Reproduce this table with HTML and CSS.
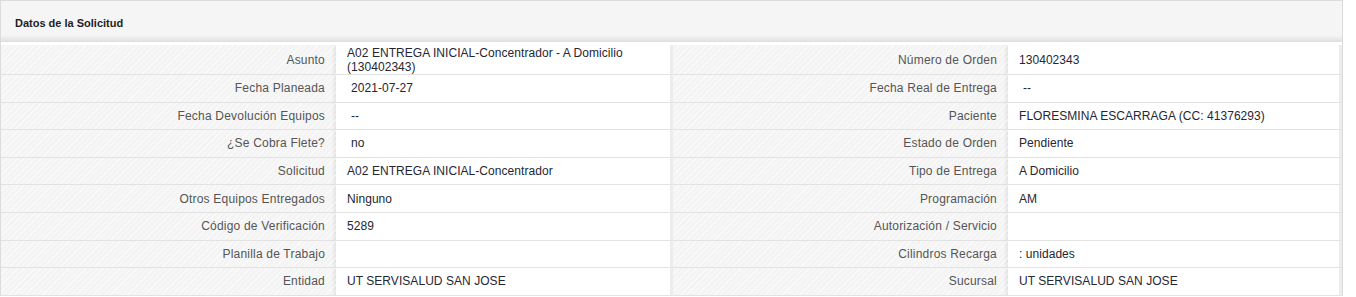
FILE: index.html
```html
<!DOCTYPE html>
<html lang="es">
<head>
<meta charset="utf-8">
<title>Datos de la Solicitud</title>
<link rel="stylesheet" href="styles.css">
</head>
<body>
<div class="panel">
  <div class="panel-head"><h3 class="panel-title">Datos de la Solicitud</h3></div>
  <div class="grid">
    <div class="lbl first">Asunto</div><div class="val first">A02 ENTREGA INICIAL-Concentrador - A Domicilio<br>(130402343)</div>
    <div class="lbl first">Número de Orden</div><div class="val first">130402343</div>

    <div class="lbl">Fecha Planeada</div><div class="val ind">2021-07-27</div>
    <div class="lbl">Fecha Real de Entrega</div><div class="val ind">--</div>

    <div class="lbl">Fecha Devolución Equipos</div><div class="val ind">--</div>
    <div class="lbl">Paciente</div><div class="val">FLORESMINA ESCARRAGA (CC: 41376293)</div>

    <div class="lbl">¿Se Cobra Flete?</div><div class="val ind">no</div>
    <div class="lbl">Estado de Orden</div><div class="val">Pendiente</div>

    <div class="lbl">Solicitud</div><div class="val">A02 ENTREGA INICIAL-Concentrador</div>
    <div class="lbl">Tipo de Entrega</div><div class="val">A Domicilio</div>

    <div class="lbl">Otros Equipos Entregados</div><div class="val">Ninguno</div>
    <div class="lbl">Programación</div><div class="val">AM</div>

    <div class="lbl">Código de Verificación</div><div class="val">5289</div>
    <div class="lbl">Autorización / Servicio</div><div class="val"></div>

    <div class="lbl">Planilla de Trabajo</div><div class="val"></div>
    <div class="lbl">Cilindros Recarga</div><div class="val">: unidades</div>

    <div class="lbl">Entidad</div><div class="val">UT SERVISALUD SAN JOSE</div>
    <div class="lbl">Sucursal</div><div class="val">UT SERVISALUD SAN JOSE</div>
  </div>
</div>
</body>
</html>
```

FILE: styles.css
```css
html, body {
  margin: 0;
  padding: 0;
  background: #ffffff;
}

body {
  font-family: "Liberation Sans", Arial, sans-serif;
  font-size: 12px;
  color: #2b2b33;
}

.panel {
  width: 1341px;
  border: 1px solid #dcdcdc;
  border-bottom: none;
  background: #ffffff;
}

.panel-head {
  height: 41px;
  display: flex;
  align-items: center;
  padding: 0 0 0 14px;
  background: linear-gradient(to bottom, #f5f5f5 0, #f5f5f5 34px, #ececec 37px, #dedede 41px);
  margin-bottom: 3px;
}

.panel-title {
  margin: 0;
  font-size: 11px;
  font-weight: bold;
  color: #1e1e1e;
  position: relative;
  top: 1px;
}

.grid {
  display: grid;
  grid-template-columns: 335px 337px 335px 1fr;
}

.lbl, .val {
  min-height: 26.6px;
  border-bottom: 1px solid #e2e2e2;
  display: flex;
  align-items: center;
  line-height: 14px;
}

.lbl.first, .val.first {
  min-height: 29px;
}

.lbl {
  justify-content: flex-end;
  padding: 0 11px 0 8px;
  letter-spacing: 0.2px;
  color: #555555;
  background-color: #f4f4f4;
  background-image:
    repeating-linear-gradient(135deg, rgba(255,255,255,0.55) 0 1px, rgba(255,255,255,0) 1px 4px),
    linear-gradient(to right, rgba(0,0,0,0) 0, rgba(0,0,0,0) calc(100% - 4px), #ececec calc(100% - 3px), #e3e3e3 100%);
}

.val {
  padding: 0 10px 0 11px;
  letter-spacing: 0.05px;
  color: #262633;
  background: #ffffff;
  border-right: 3px solid #ececec;
}

.val.ind {
  padding-left: 15px;
}
```
